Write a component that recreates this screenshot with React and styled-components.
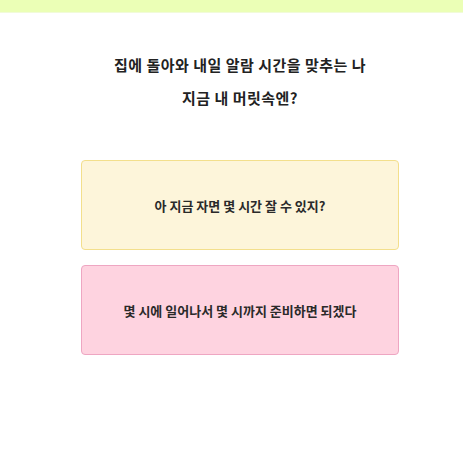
import React from 'react'
import styled, { createGlobalStyle } from 'styled-components';

const GlobalStyle = createGlobalStyle`
    body {
        margin: 0;
        background: #ffffff;
        font-family: "Noto Sans CJK KR", "Noto Sans", sans-serif;
        color: #222222;
    }
`;

const TopBar = styled.div`
    height: 12px;
    background: #ebffb6;
    border-bottom: 1px solid #f1fbd9;
`;

const Page = styled.div`
    padding: 35px 64px 0 81px;
    display: flex;
    flex-direction: column;
`;

const Title = styled.h1`
    margin: 0 0 46px 0;
    font-size: 15px;
    font-weight: 700;
    line-height: 33px;
    text-align: center;
    letter-spacing: 0.5px;
`;

const CardList = styled.div`
    display: flex;
    flex-direction: column;
    gap: 15px;
`;

const Card = styled.div`
    height: 90px;
    box-sizing: border-box;
    display: flex;
    align-items: center;
    justify-content: center;
    border-radius: 4px;
    background: ${props => props.bg};
    border: 1px solid ${props => props.line};
    font-size: 13px;
    font-weight: 700;
    color: #2a2a2a;
`;

const App = () => {
  return (
    <>
      <GlobalStyle />
      <TopBar />
      <Page>
        <Title>
          집에 돌아와 내일 알람 시간을 맞추는 나<br />
          지금 내 머릿속엔?
        </Title>
        <CardList>
          <Card bg="#fdf5da" line="#f3df8c">아 지금 자면 몇 시간 잘 수 있지?</Card>
          <Card bg="#fed3e0" line="#eea6c2">몇 시에 일어나서 몇 시까지 준비하면 되겠다</Card>
        </CardList>
      </Page>
    </>
  )
}

export default App
